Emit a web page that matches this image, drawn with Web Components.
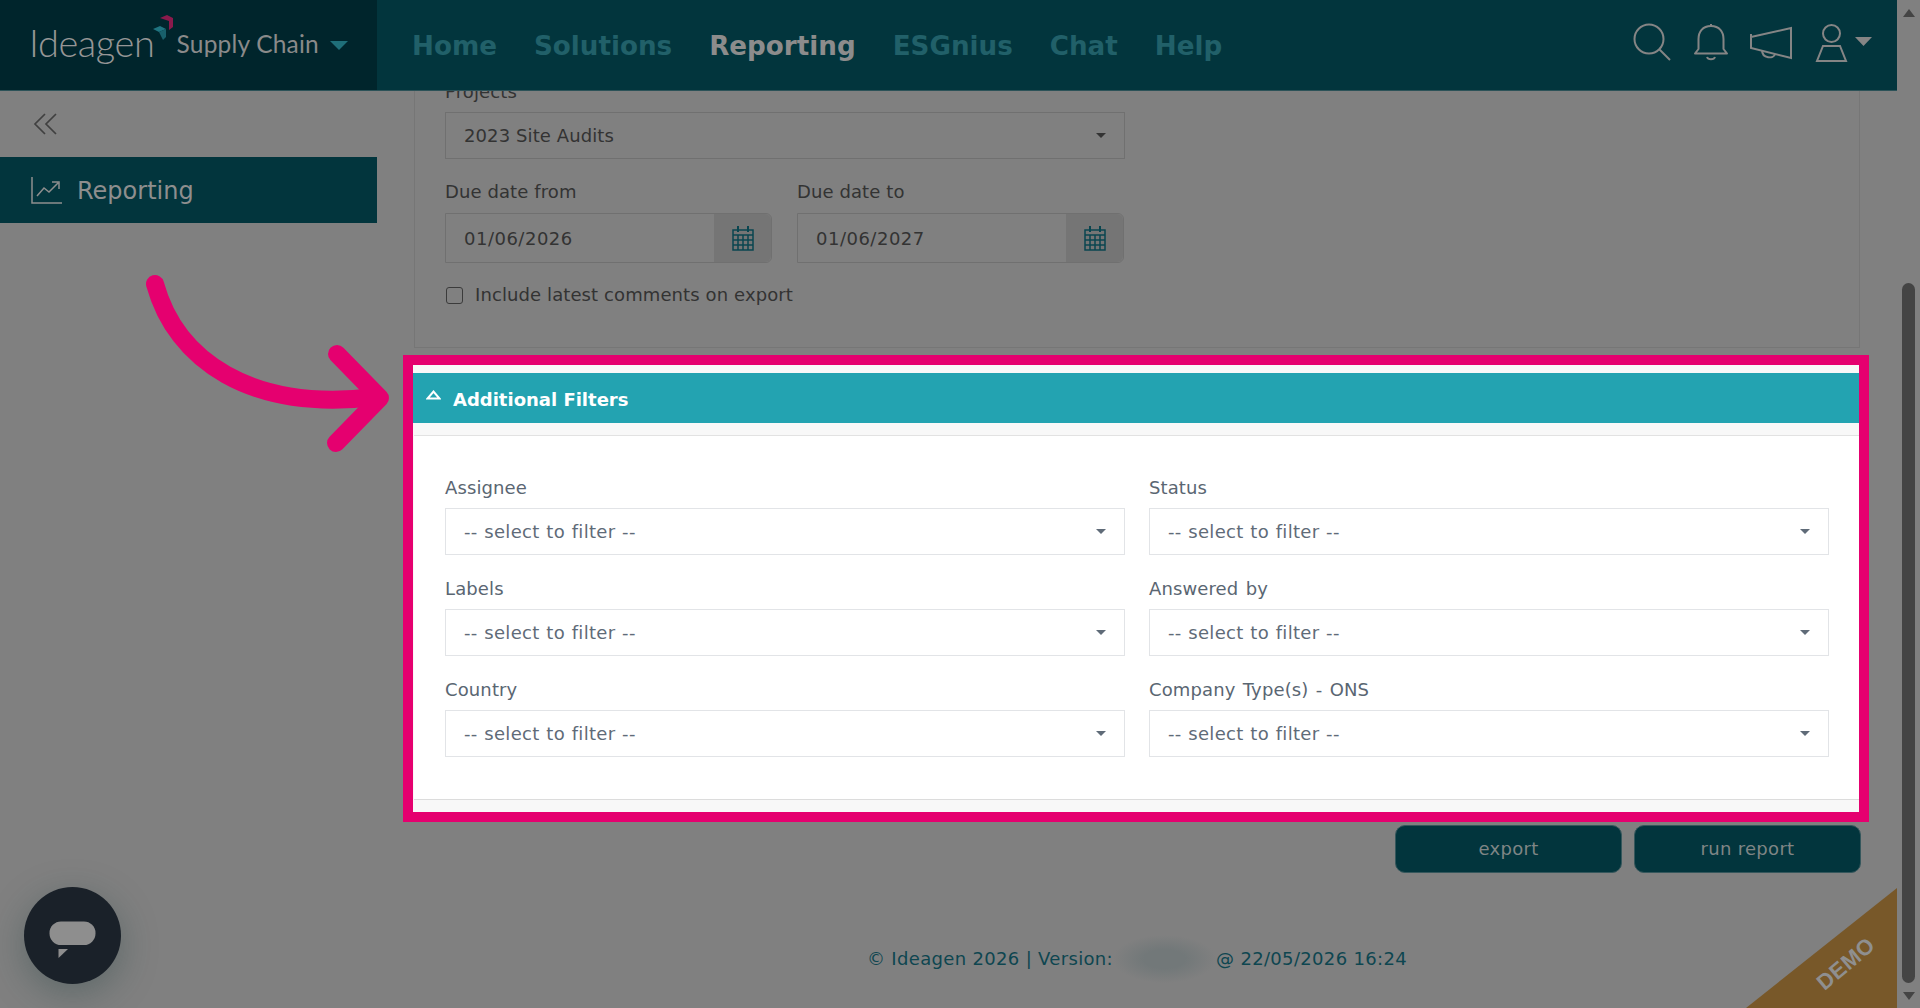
<!DOCTYPE html>
<html lang="en">
<head>
<meta charset="utf-8">
<title>Reporting</title>
<style>
html,body{margin:0;height:100%;overflow:hidden;background:#808080}
body{font-family:"DejaVu Sans",sans-serif;font-size:18px;line-height:24px}
</style>
</head>
<body>
<x-app></x-app>
<template id="t-app">
<style>
:host{display:flex;width:1920px;height:1008px;position:relative;overflow:hidden;background:#808080}
.col{flex:0 0 1897px;display:flex;flex-direction:column;min-width:0}
.row{flex:1;display:flex;min-height:0}
x-main{flex:1;min-width:0}
</style>
<div class="col">
  <x-topbar></x-topbar>
  <div class="row"><x-sidebar></x-sidebar><x-main></x-main></div>
</div>
<x-scrollbar></x-scrollbar>
<x-arrow></x-arrow>
<x-chat></x-chat>
<x-demo>DEMO</x-demo>
</template>

<template id="t-topbar">
<style>
:host{display:flex;height:90px;flex:none;background:#02353d;border-bottom:1px solid #2c5258;box-sizing:content-box}
.brand{flex:0 0 377px;background:#00252c;display:flex;align-items:flex-start;color:#8b8b8b}
.word{margin:20px 0 0 29px;font:300 38px/44px Lato,sans-serif;letter-spacing:-.4px;color:#969696}
.mark{margin:15px 0 0 -3px;flex:none}
.sc{margin:30px 0 0 3px;font:400 24.5px/28px Lato,sans-serif;color:#8a8a8a;letter-spacing:.2px;white-space:nowrap}
.tri{margin:41px 0 0 11px;width:0;height:0;border:9px solid transparent;border-top-color:#1f6f79;border-bottom:0;flex:none}
nav{flex:1;display:flex;gap:37px;padding:0 0 0 35px;align-items:center;font-weight:700;font-size:26.2px;line-height:32px;color:#216069;margin-top:1px}
nav b{font-weight:700}
nav .on{color:#8c8c8c}
.icons{display:flex;flex:none;align-items:flex-start}
svg{display:block;fill:none;stroke:#858585;stroke-width:2}
</style>
<div class="brand"><span class="word">Ideagen</span>
<svg class="mark" width="22" height="28" viewBox="0 0 22 28" style="stroke:none"><path d="M8 3l7-3 6 3v9l-4 3V6z" fill="#8a1a4c"/><path d="M1 14l7-3 6 3-7 3z" fill="#1f7480"/><path d="M7 17l7-3v8l-3 3z" fill="#18606b"/></svg>
<span class="sc">Supply Chain</span><span class="tri"></span></div>
<nav><b>Home</b><b>Solutions</b><b class="on">Reporting</b><b>ESGnius</b><b>Chat</b><b>Help</b></nav>
<div class="icons">
<svg width="264" height="90" viewBox="1633 0 264 90">
<circle cx="1649" cy="39" r="14.5"/><path d="M1659.500 49.500L1670 60"/>
<path d="M1695 53.500h32l-3.500-4.500V39c0-7-4-13-12.500-13s-12.500 6-12.500 13v10z" stroke-linejoin="round"/><path d="M1711 26v-2M1707 57c1 3 7 3 8 0"/>
<path d="M1751 37l40-9v30l-40-10zM1751 34v14"/><path d="M1762 50c0 9 12 9 13 4"/>
<circle cx="1831.500" cy="33.500" r="8.500"/><path d="M1823 46h17l6 15h-29z"/>
<path d="M1855 37h17l-8.500 9z" fill="#858585" stroke="none"/>
</svg>
</div>
</template>

<template id="t-sidebar">
<style>
:host{display:block;flex:0 0 377px;background:#808080}
.tog{height:66px;display:flex;align-items:center;padding-left:33px}
.item{height:66px;background:#02353d;display:flex;align-items:center;color:#8e8e8e;font-size:24px;padding-left:31px;gap:15px}
.item span{position:relative;top:1px}
svg{display:block;fill:none}
</style>
<div class="tog"><svg width="25" height="22" viewBox="0 0 25 22" stroke="#404040" stroke-width="1.7"><path d="M12 1L2 11l10 10M23 1L13 11l10 10"/></svg></div>
<div class="item"><svg width="31" height="27" viewBox="0 0 31 27" stroke="#8e8e8e" stroke-width="1.5"><path d="M1 0v26h30M6 19l7-8 5 4 9-9M21 5h7v7"/></svg><span>Reporting</span></div>
</template>

<template id="t-main">
<style>
:host{display:flex;flex-direction:column;overflow:hidden;padding:0 37px;box-sizing:border-box;color:#333}
.panel{margin-top:-12px;padding:0 30px 0 30px;height:269px;box-sizing:border-box;border:1px solid #767676;border-top:0;flex:none}
x-select[dim]{width:680px}
.dates{display:flex;gap:25px;margin-top:21px}
x-date{flex:0 0 327px}
.check{display:flex;align-items:center;gap:12px;margin-top:20px;color:#333;line-height:24px;letter-spacing:.1px}
.box{width:15px;height:15px;border:1.5px solid #3b3b3b;border-radius:3px;margin-left:1px}
x-filters{margin:7px -9px 0 -11px;flex:none}
.btns{display:flex;justify-content:flex-end;gap:12px;margin:3px -1px 0 0;flex:none}
x-foot{margin-top:62px;flex:none}
</style>
<div class="panel">
  <x-select label="Projects" value="2023 Site Audits" dim></x-select>
  <div class="dates">
    <x-date label="Due date from" value="01/06/2026"></x-date>
    <x-date label="Due date to" value="01/06/2027"></x-date>
  </div>
  <div class="check"><span class="box"></span><span>Include latest comments on export</span></div>
</div>
<x-filters title="Additional Filters">
  <x-select label="Assignee" value="-- select to filter --"></x-select>
  <x-select label="Status" value="-- select to filter --"></x-select>
  <x-select label="Labels" value="-- select to filter --"></x-select>
  <x-select label="Answered by" value="-- select to filter --"></x-select>
  <x-select label="Country" value="-- select to filter --"></x-select>
  <x-select label="Company Type(s) - ONS" value="-- select to filter --"></x-select>
</x-filters>
<div class="btns"><x-btn>export</x-btn><x-btn>run report</x-btn></div>
<x-foot></x-foot>
</template>

<template id="t-select">
<style>
:host{display:block;color:#5a6672}
:host([dim]){color:#333}
label{display:block;line-height:24px;margin-bottom:9px;letter-spacing:.12px;word-spacing:1.5px;position:relative;top:.5px}
.sel{height:47px;box-sizing:border-box;border:1.5px solid #e2e4e7;background:#fff;display:flex;align-items:center;justify-content:space-between;padding:0 18px 0 18px;color:#5f6b78}
.v{letter-spacing:.3px;word-spacing:.7px;position:relative;top:.5px}
:host([dim]) .sel{background:transparent;border:1px solid #707070;color:#333}
:host([dim]) .v{letter-spacing:.1px;word-spacing:0}
.c{width:0;height:0;border:5px solid transparent;border-top:5px solid #5f6b78;border-bottom:0}
:host([dim]) .c{border-top-color:#333}
</style>
<label></label><div class="sel"><span class="v"></span><span class="c"></span></div>
</template>

<template id="t-date">
<style>
:host{display:block;color:#333}
label{display:block;line-height:24px;margin-bottom:9px;letter-spacing:.1px}
.in{height:50px;box-sizing:border-box;border:1px solid #707070;border-radius:0 6px 6px 0;display:flex}
.v{flex:1;display:flex;align-items:center;padding:2px 0 0 18px;color:#333;letter-spacing:.5px}
.a{flex:0 0 57px;background:#757575;border-radius:0 6px 6px 0;display:flex;align-items:center;justify-content:center}
svg{display:block;fill:none;stroke:#0a4650;stroke-width:1.5}
</style>
<label></label>
<div class="in"><span class="v"></span><span class="a"><svg width="22" height="25" viewBox="0 0 22 25"><path d="M1 4h20v20H1zM1 9h20M1 14h20M1 19h20M6 9v15M11 9v15M16 9v15" /><path d="M6 0v6M16 0v6" stroke-width="2"/></svg></span></div>
</template>

<template id="t-filters">
<style>
:host{display:block;border:10px solid #e5006f;background:#f8f8f8;height:467px;box-sizing:border-box;padding-top:8px}
.h{height:50px;background:#23a3b1;color:#fff;font-weight:700;font-size:18px;display:flex;align-items:center;padding-left:13px;gap:12px}
.h .t{position:relative;top:1.5px}
.h svg{display:block;fill:none;stroke:#fff;stroke-width:2;margin-top:-6px}
.b{margin:12px 0 0 1px;background:#fff;border-top:1px solid #e2e2e2;border-bottom:1px solid #dcdcdc;height:365px;box-sizing:border-box;padding:39px 30px 0 31px;display:grid;grid-template-columns:680px 680px;column-gap:24px;row-gap:21px;align-content:start}
</style>
<div class="h"><svg width="15" height="10" viewBox="0 0 15 10"><path d="M1.5 8.5h12L7.5 1.5z"/></svg><span class="t"></span></div>
<div class="b"><slot></slot></div>
</template>

<template id="t-btn">
<style>
:host{display:flex;width:227px;height:48px;background:#02353d;border-radius:10px;align-items:center;justify-content:center;color:#7f8585;font-size:18px;letter-spacing:.3px;border:1px solid #35575c;box-sizing:border-box}
</style>
<slot></slot>
</template>

<template id="t-foot">
<style>
:host{display:flex;justify-content:center;align-items:center;color:#0e4650;font-size:18px;letter-spacing:.33px}
.blur{width:103px;height:48px;background:radial-gradient(closest-side,#727879 40%,#808080);}
</style>
<span>© Ideagen 2026 | Version:</span><span class="blur"></span><span>@ 22/05/2026 16:24</span>
</template>

<template id="t-scrollbar">
<style>
:host{flex:0 0 23px;display:flex;flex-direction:column;align-items:center;background:#808080}
.u,.d{width:0;height:0;border:6px solid transparent;flex:none}
.u{border-bottom:8px solid #444;border-top:0;margin-top:9px}
.d{border-top:8px solid #444;border-bottom:0;margin-top:9px;margin-bottom:8px}
.s{flex:1;display:flex;flex-direction:column;align-items:center;width:100%;padding-top:266px;box-sizing:border-box}
.t{flex:1;width:13px;background:#444;border-radius:7px}
</style>
<span class="u"></span><div class="s"><div class="t"></div></div><span class="d"></span>
</template>

<template id="t-arrow">
<style>:host{position:absolute;left:130px;top:260px;width:270px;height:200px;pointer-events:none}svg{display:block}</style>
<svg width="270" height="200" viewBox="130 260 270 200" fill="none" stroke="#e5006f" stroke-width="18" stroke-linecap="round" stroke-linejoin="round"><path d="M155 284C176 360 250 412 375 397"/><path d="M337 354L380 398 336 443"/></svg>
</template>

<template id="t-chat">
<style>
:host{position:absolute;left:24px;top:887px;width:97px;height:97px;border-radius:50%;background:#1a2129;box-shadow:0 10px 36px rgba(30,60,60,.35)}
svg{display:block}
</style>
<svg width="97" height="97" viewBox="0 0 97 97"><rect x="25.500" y="34.500" width="46" height="23.500" rx="11.500" fill="#8e8e8e"/><path d="M34.500 62h9.500l-9.500 9z" fill="#8e8e8e"/></svg>
</template>

<template id="t-demo">
<style>
:host{position:absolute;left:1746px;top:888px;width:151px;height:120px;background:#785829;clip-path:polygon(100% 0,100% 100%,0 100%);display:block}
span{position:absolute;left:50px;top:62px;width:100px;text-align:center;font:700 22px/28px "Liberation Sans",sans-serif;color:#8f8f8f;transform:rotate(-40deg);transform-origin:50% 50%;letter-spacing:.5px}
</style>
<span><slot></slot></span>
</template>

<script>
function def(name,tid,init){
  customElements.define(name,class extends HTMLElement{
    constructor(){super();const r=this.attachShadow({mode:'open'});r.appendChild(document.getElementById(tid).content.cloneNode(true));this._r=r;}
    connectedCallback(){if(!init)return;init(this._r,this);}
  });
}
function withAttrs(r,h){
  const l=r.querySelector('label');if(l)l.textContent=h.getAttribute('label');
  const v=r.querySelector('.v');if(v)v.textContent=h.getAttribute('value');
  const t=r.querySelector('.t');if(t&&h.hasAttribute('title'))t.textContent=h.getAttribute('title');
}
def('x-topbar','t-topbar');
def('x-sidebar','t-sidebar');
def('x-main','t-main');
def('x-select','t-select',withAttrs);
def('x-date','t-date',withAttrs);
def('x-filters','t-filters',withAttrs);
def('x-btn','t-btn');
def('x-foot','t-foot');
def('x-scrollbar','t-scrollbar');
def('x-arrow','t-arrow');
def('x-chat','t-chat');
def('x-demo','t-demo');
def('x-app','t-app');
</script>
</body>
</html>
